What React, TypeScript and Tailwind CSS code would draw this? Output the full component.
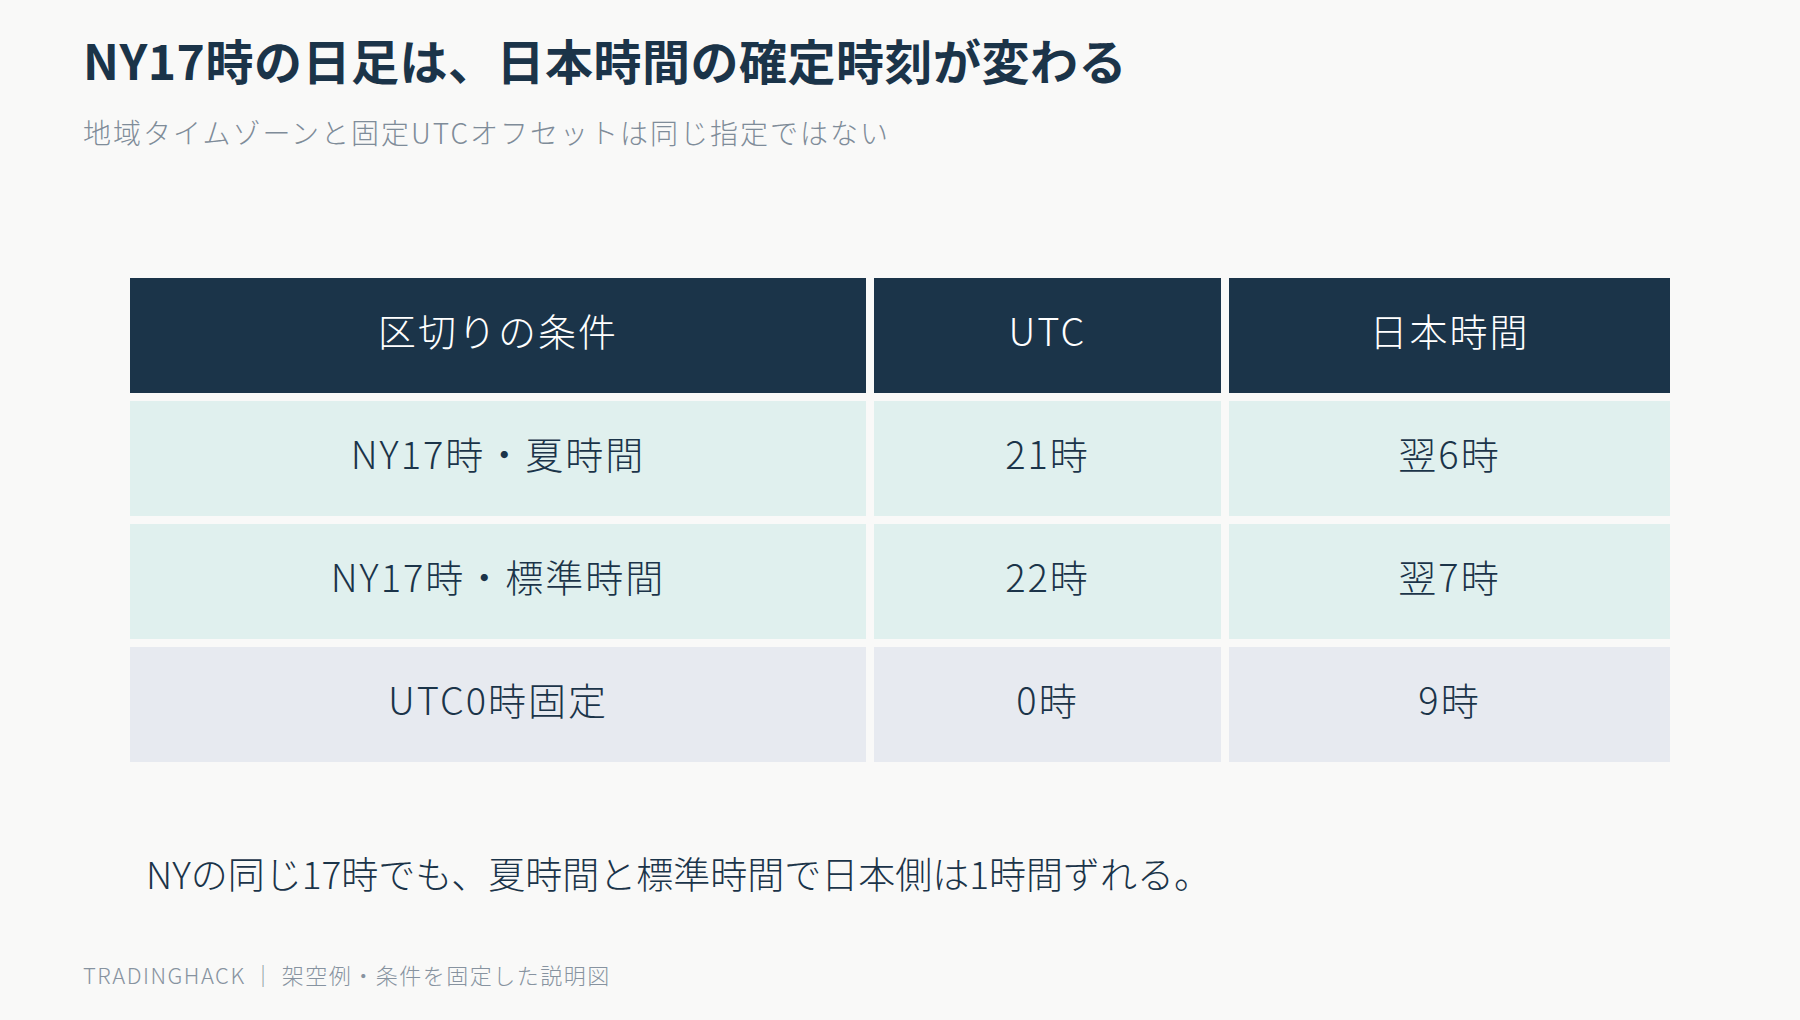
import React from "react";

const FONT = { fontFamily: '"Noto Sans CJK JP", "Noto Sans", sans-serif' };

type Row = { cond: string; utc: string; jst: string; bg: string };

const rows: Row[] = [
  { cond: "NY17時・夏時間", utc: "21時", jst: "翌6時", bg: "bg-[#e0f0ee]" },
  { cond: "NY17時・標準時間", utc: "22時", jst: "翌7時", bg: "bg-[#e0f0ee]" },
  { cond: "UTC0時固定", utc: "0時", jst: "9時", bg: "bg-[#e7eaf0]" },
];

export default function App() {
  return (
    <div
      className="w-[1800px] h-[1020px] bg-[#f9f9f8] flex flex-col px-[83px] pt-[30px] text-[#1b3449]"
      style={FONT}
    >
      <h1 className="text-[48px] leading-[58px] font-bold text-[#1b3449] tracking-[0.5px]">
        NY17時の日足は、日本時間の確定時刻が変わる
      </h1>
      <p className="mt-[26px] text-[28px] leading-[36px] text-[#7f8c99] font-light tracking-[2px]">
        地域タイムゾーンと固定UTCオフセットは同じ指定ではない
      </p>

      <div className="mx-[47px] mt-[128px] grid grid-cols-[736px_347px_441px] gap-2">
        <div className="h-[115px] pb-3 bg-[#1b3449] text-white flex items-center justify-center text-[38px] font-light tracking-[2px]">
          区切りの条件
        </div>
        <div className="h-[115px] pb-3 bg-[#1b3449] text-white flex items-center justify-center text-[38px] font-light tracking-[2px]">
          UTC
        </div>
        <div className="h-[115px] pb-3 bg-[#1b3449] text-white flex items-center justify-center text-[38px] font-light tracking-[2px]">
          日本時間
        </div>
        {rows.map((r) => (
          <React.Fragment key={r.cond}>
            <div className={`h-[115px] pb-3 ${r.bg} flex items-center justify-center text-[38px] font-light tracking-[2px]`}>
              {r.cond}
            </div>
            <div className={`h-[115px] pb-3 ${r.bg} flex items-center justify-center text-[38px] font-light tracking-[2px]`}>
              {r.utc}
            </div>
            <div className={`h-[115px] pb-3 ${r.bg} flex items-center justify-center text-[38px] font-light tracking-[2px]`}>
              {r.jst}
            </div>
          </React.Fragment>
        ))}
      </div>

      <p className="mt-[89px] pl-[63px] text-[37px] leading-[44px] font-light">
        NYの同じ17時でも、夏時間と標準時間で日本側は1時間ずれる。
      </p>

      <p className="mt-[65px] text-[22px] leading-[28px] text-[#8793a0] font-light tracking-[1.5px]">
        TRADINGHACK ｜ 架空例・条件を固定した説明図
      </p>
    </div>
  );
}
